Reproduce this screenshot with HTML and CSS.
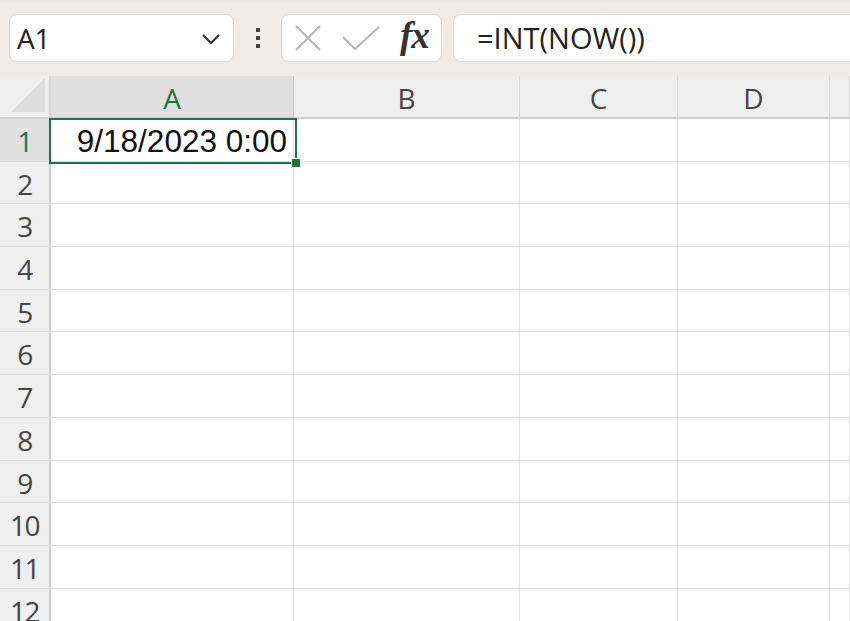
FILE: index.html
```html
<!DOCTYPE html>
<html>
<head lang="en">
    <meta charset="UTF-8">
    <title>INT(NOW())</title>
    <link rel="stylesheet" href="styles.css">
</head>
<body>
    <div id="toolbar">
        <div class="namebox">
            <span class="name">A1</span>
            <svg class="chev" width="20" height="12" viewBox="0 0 20 12"><path d="M2 2 L10 10 L18 2" fill="none" stroke="#333" stroke-width="2"/></svg>
        </div>
        <div class="dots"><i></i><i></i><i></i></div>
        <div class="btns">
            <svg width="28" height="28" viewBox="0 0 28 28"><path d="M2 2 L26 26 M26 2 L2 26" stroke="#b5b5b5" stroke-width="2"/></svg>
            <svg width="38" height="24" viewBox="0 0 38 24"><path d="M1 11 L13 23 L37 1" fill="none" stroke="#b5b5b5" stroke-width="2"/></svg>
            <span class="fx">fx</span>
        </div>
        <div class="formula">=INT(NOW())</div>
    </div>
    <div id="sheet">
        <div class="hrow">
            <div class="corner"><span></span></div>
            <div class="ch sel colA">A</div>
            <div class="ch colB">B</div>
            <div class="ch colC">C</div>
            <div class="ch colD">D</div>
            <div class="ch colE"></div>
        </div>
        <div id="rows"></div>
        <div class="cursor"><span></span></div>
    </div>
    <script>
        var oRows=document.getElementById('rows');
        var html='';
        for(var i=1;i<=12;i++){
            html+='<div class="row'+(i==1?' first':'')+'">'+
                  '<div class="rh">'+i+'</div>'+
                  '<div class="c colA">'+(i==1?'9/18/2023 0:00':'')+'</div>'+
                  '<div class="c colB"></div><div class="c colC"></div>'+
                  '<div class="c colD"></div><div class="c colE"></div></div>';
        }
        oRows.innerHTML=html;
    </script>
</body>
</html>
```

FILE: styles.css
```css
*{
    margin: 0;
    padding: 0;
    box-sizing: border-box;
}
body{
    width: 850px;
    height: 621px;
    overflow: hidden;
    background: #fff;
    font-family: "Open Sans", "Noto Sans", sans-serif;
}
#toolbar{
    height: 76px;
    background: #eeebe9;
    border-top: 2px solid #e6e3e1;
    display: flex;
    align-items: center;
    padding: 0 0 3px 9px;
}
.namebox{
    width: 225px;
    height: 48px;
    background: #fff;
    border: 1px solid #dedbd9;
    border-radius: 8px;
    display: flex;
    align-items: center;
    justify-content: space-between;
    padding: 0 12px 0 7px;
}
.name{
    font-size: 28px;
    letter-spacing: -0.3px;
    color: #222;
}
.chev{
    margin-top: 2px;
}
.dots{
    width: 47px;
    display: flex;
    flex-direction: column;
    align-items: center;
    gap: 4px;
}
.dots i{
    width: 4px;
    height: 4px;
    background: #444;
}
.btns{
    width: 161px;
    height: 48px;
    background: #fff;
    border: 1px solid #dedbd9;
    border-radius: 8px;
    display: flex;
    align-items: center;
    padding: 0 10px 0 12px;
    gap: 20px;
}
.fx{
    font-family: "Liberation Serif", serif;
    font-style: italic;
    font-weight: bold;
    font-size: 37px;
    line-height: 1;
    color: #333;
    letter-spacing: -1px;
    margin-top: -4px;
}
.formula{
    flex: 1;
    margin-left: 11px;
    height: 48px;
    background: #fff;
    border: 1px solid #dedbd9;
    border-right: none;
    border-radius: 8px 0 0 8px;
    display: flex;
    align-items: center;
    padding-left: 23px;
    font-size: 29px;
    color: #222;
}
#sheet{
    position: relative;
}
.hrow{
    display: flex;
    height: 43px;
    background: #efefef;
    border-bottom: 2px solid #cfcfcf;
}
.corner{
    width: 51px;
    border-right: 2px solid #d4d4d4;
    position: relative;
}
.corner span{
    position: absolute;
    right: 4px;
    bottom: 5px;
    width: 0;
    height: 0;
    border-left: 34px solid transparent;
    border-bottom: 34px solid #dcdcdc;
}
.ch{
    border-right: 1px solid #d9d9d9;
    display: flex;
    align-items: center;
    justify-content: center;
    font-size: 28px;
    color: #444;
    padding-top: 3px;
}
.ch.sel{
    background: #e0e0e0;
    color: #217346;
    border-right-color: #c6c6c6;
}
.colA{ width: 243px; }
.colB{ width: 226px; }
.colC{ width: 158px; }
.colD{ width: 152px; }
.colE{ flex: 1; }
.row{
    display: flex;
    height: 42.7px;
    border-bottom: 1px solid #e1e1e1;
}
.rh{
    width: 51px;
    background: #efefef;
    border-right: 2px solid #cdcdcd;
    border-bottom: 1px solid #dcdcdc;
    margin-bottom: -1px;
    font-size: 28px;
    letter-spacing: -1.5px;
    color: #444;
    text-align: center;
    line-height: 42px;
    padding-top: 1px;
}
.row.first .rh{
    background: #e0e0e0;
    color: #217346;
}
.c{
    border-right: 1px solid #e1e1e1;
}
.row.first .colA{
    font-family: "Liberation Sans", sans-serif;
    font-size: 31.5px;
    color: #111;
    text-align: right;
    padding-right: 6px;
    line-height: 42px;
    padding-top: 1px;
    white-space: nowrap;
}
.cursor{
    position: absolute;
    left: 49px;
    top: 42px;
    width: 248px;
    height: 46px;
    border: 2px solid #217346;
}
.cursor span{
    position: absolute;
    right: -6px;
    bottom: -6px;
    width: 10px;
    height: 10px;
    background: #217346;
    border: 1px solid #fff;
}
```
